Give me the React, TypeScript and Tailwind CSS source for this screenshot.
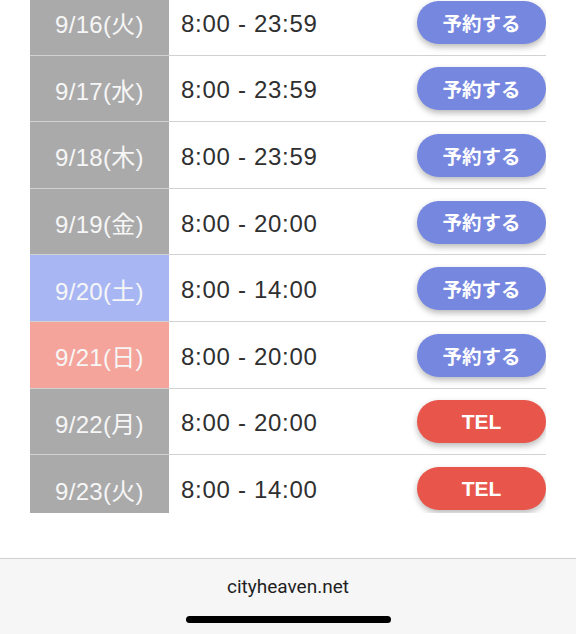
import React from "react";

type Row = { date: string; time: string; kind: "normal" | "sat" | "sun"; btn: "yoyaku" | "tel" };

const rows: Row[] = [
  { date: "9/16(火)", time: "8:00 - 23:59", kind: "normal", btn: "yoyaku" },
  { date: "9/17(水)", time: "8:00 - 23:59", kind: "normal", btn: "yoyaku" },
  { date: "9/18(木)", time: "8:00 - 23:59", kind: "normal", btn: "yoyaku" },
  { date: "9/19(金)", time: "8:00 - 20:00", kind: "normal", btn: "yoyaku" },
  { date: "9/20(土)", time: "8:00 - 14:00", kind: "sat", btn: "yoyaku" },
  { date: "9/21(日)", time: "8:00 - 20:00", kind: "sun", btn: "yoyaku" },
  { date: "9/22(月)", time: "8:00 - 20:00", kind: "normal", btn: "tel" },
  { date: "9/23(火)", time: "8:00 - 14:00", kind: "normal", btn: "tel" },
];

const latin = { fontFamily: '"Liberation Sans", "Noto Sans CJK JP", sans-serif' };
const cjk = { fontFamily: '"Noto Sans CJK JP", "Noto Sans", sans-serif' };

function RowView({ r, last }: { r: Row; last: boolean }) {
  const dateBg = r.kind === "sat" ? "bg-[#a8b7f4]" : r.kind === "sun" ? "bg-[#f4a49b]" : "bg-[#aaaaaa]";
  return (
    <div className={`flex h-[66.6px] ${last ? "" : "border-b border-[#d2d2d2]"}`}>
      <div
        className={`w-[139px] flex items-center justify-center pt-[7px] ${dateBg} text-[#f6f6f6] text-[24px] tracking-[0.3px]`}
        style={latin}
      >
        {r.date}
      </div>
      <div className="flex-1 flex items-center pl-[12px]" style={latin}>
        <span className="pt-[4px] text-[#2f2f2f] text-[24px] tracking-[0.7px]">{r.time}</span>
        <div className="flex-1" />
        {r.btn === "tel" ? (
          <button
            className="w-[129px] h-[43px] mt-[1px] rounded-full text-white text-[21px] font-bold shadow-[0_3px_6px_rgba(0,0,0,0.28)] bg-[#e8564b]"
            style={latin}
          >
            TEL
          </button>
        ) : (
          <button
            className="w-[129px] h-[43px] mt-[1px] rounded-full text-white text-[19.5px] font-bold shadow-[0_3px_6px_rgba(0,0,0,0.28)] bg-[#7687e0]"
            style={cjk}
          >
            予約する
          </button>
        )}
      </div>
    </div>
  );
}

export default function App() {
  return (
    <div className="w-[576px] h-[634px] overflow-hidden bg-white flex flex-col">
      <div className="h-[558px] overflow-hidden px-[30px]">
        <div className="-mt-[11px] h-[524px] overflow-hidden">
          {rows.map((r, i) => (
            <RowView key={i} r={r} last={i === rows.length - 1} />
          ))}
        </div>
      </div>
      <div className="flex-1 border-t border-[#cfcfcf] bg-[#f6f6f6] flex flex-col items-center">
        <div
          className="mt-[14px] text-[19px] text-[#1f1f1f]"
          style={{ fontFamily: '"Roboto", "Noto Sans", sans-serif' }}
        >
          cityheaven.net
        </div>
        <div className="mt-[14px] w-[205px] h-[7px] rounded-full bg-black" />
      </div>
    </div>
  );
}
